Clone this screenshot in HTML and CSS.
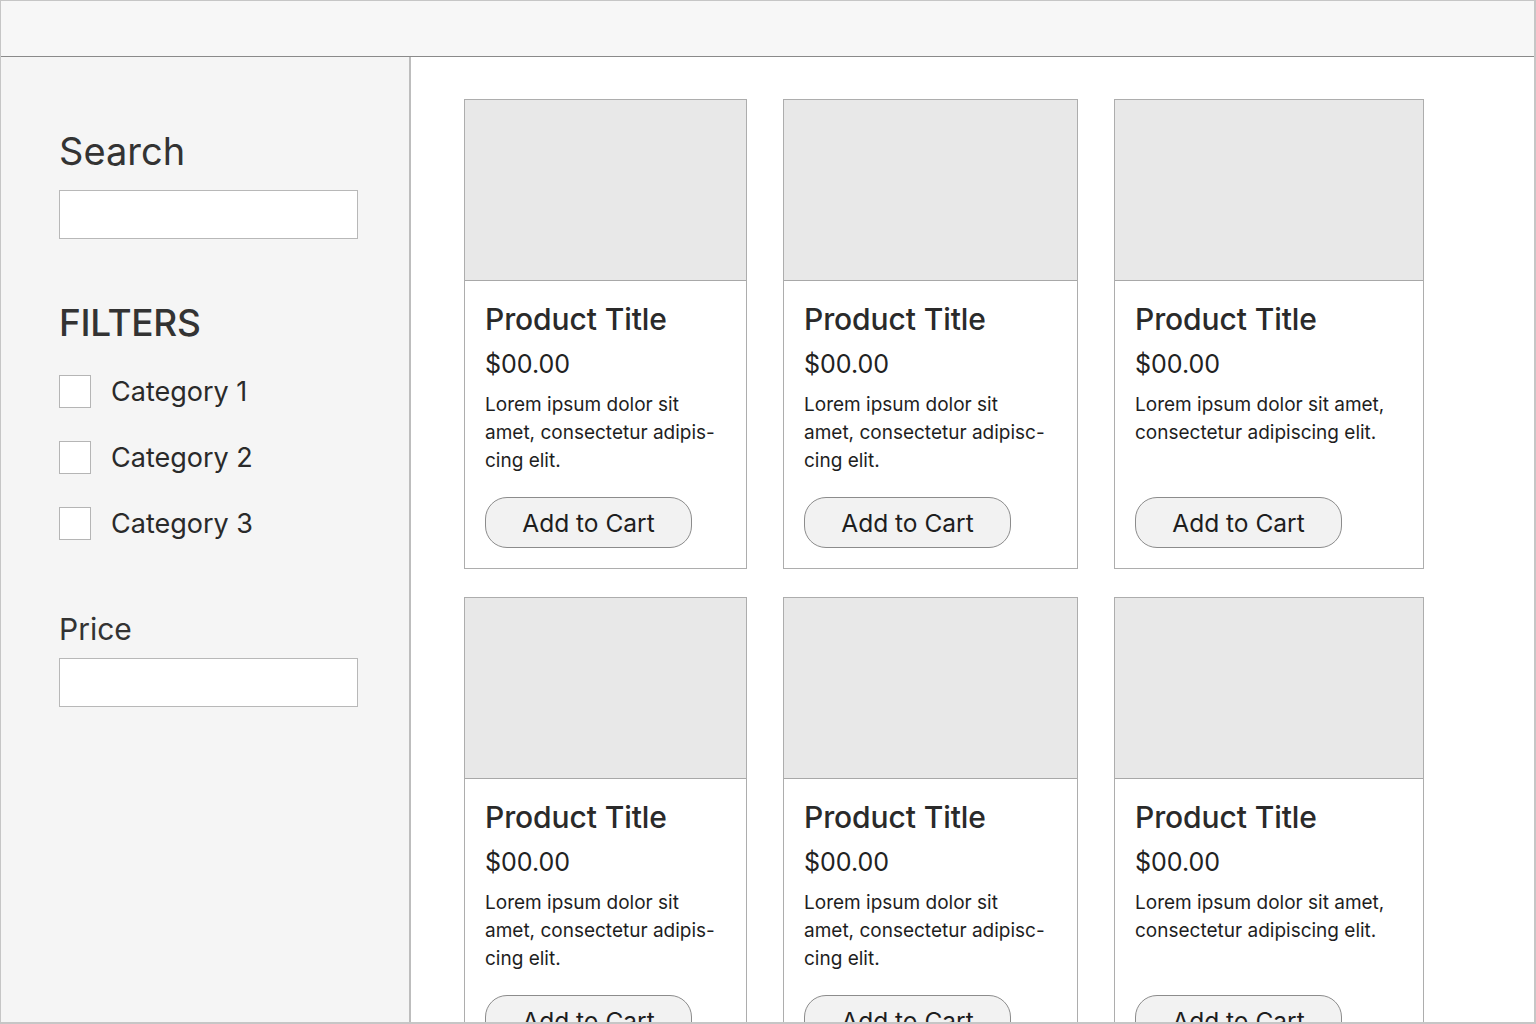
FILE: index.html
```html
<!DOCTYPE html>
<html>
<head>
<meta charset="utf-8">
<link rel="stylesheet" href="styles.css">
</head>
<body>
<div class="app">
  <header class="topbar"></header>
  <div class="layout">
    <aside class="sidebar">
      <h2 class="side-title search-title">Search</h2>
      <div class="field"></div>
      <h2 class="side-title filters-title">FILTERS</h2>
      <ul class="cats">
        <li><span class="box"></span><span>Category 1</span></li>
        <li><span class="box"></span><span>Category 2</span></li>
        <li><span class="box"></span><span>Category 3</span></li>
      </ul>
      <h3 class="price-title">Price</h3>
      <div class="field"></div>
    </aside>
    <main class="main">
      <div class="grid">
        <div class="card"><div class="thumb"></div><div class="info"><h4>Product Title</h4><div class="price">$00.00</div><p class="desc">Lorem ipsum dolor sit<br>amet, consectetur adipis-<br>cing elit.</p><button class="btn">Add to Cart</button></div></div>
        <div class="card"><div class="thumb"></div><div class="info"><h4>Product Title</h4><div class="price">$00.00</div><p class="desc">Lorem ipsum dolor sit<br>amet, consectetur adipisc-<br>cing elit.</p><button class="btn">Add to Cart</button></div></div>
        <div class="card"><div class="thumb"></div><div class="info"><h4>Product Title</h4><div class="price">$00.00</div><p class="desc">Lorem ipsum dolor sit amet,<br>consectetur adipiscing elit.</p><button class="btn">Add to Cart</button></div></div>
        <div class="card"><div class="thumb"></div><div class="info"><h4>Product Title</h4><div class="price">$00.00</div><p class="desc">Lorem ipsum dolor sit<br>amet, consectetur adipis-<br>cing elit.</p><button class="btn">Add to Cart</button></div></div>
        <div class="card"><div class="thumb"></div><div class="info"><h4>Product Title</h4><div class="price">$00.00</div><p class="desc">Lorem ipsum dolor sit<br>amet, consectetur adipisc-<br>cing elit.</p><button class="btn">Add to Cart</button></div></div>
        <div class="card"><div class="thumb"></div><div class="info"><h4>Product Title</h4><div class="price">$00.00</div><p class="desc">Lorem ipsum dolor sit amet,<br>consectetur adipiscing elit.</p><button class="btn">Add to Cart</button></div></div>
      </div>
    </main>
  </div>
</div>
</body>
</html>
```

FILE: styles.css
```css
html, body {
  margin: 0;
  padding: 0;
  background: #ffffff;
}
body {
  font-family: Inter, "Noto Sans", "Liberation Sans", sans-serif;
  color: #222;
}
.app {
  width: 1536px;
  height: 1024px;
  box-sizing: border-box;
  border: 1px solid #c6c6c6;
  border-bottom-width: 2px;
  border-right-width: 2px;
  display: flex;
  flex-direction: column;
  overflow: hidden;
}
.topbar {
  height: 55px;
  flex: none;
  background: #f7f7f7;
  border-bottom: 1px solid #8a8a8a;
}
.layout {
  flex: 1;
  display: flex;
  min-height: 0;
}
.sidebar {
  width: 410px;
  flex: none;
  background: #f5f5f5;
  border-right: 2px solid #bdbdbd;
  padding: 72px 0 0 58px;
  box-sizing: border-box;
}
.side-title {
  margin: 0;
  font-weight: 400;
  color: #333;
}
.search-title {
  font-size: 38px;
  line-height: 44px;
}
.field {
  width: 297px;
  height: 47px;
  background: #fff;
  border: 1px solid #b8b8b8;
  margin-top: 17px;
}
.filters-title {
  font-size: 37px;
  line-height: 44px;
  margin-top: 62px;
  font-weight: 500;
  letter-spacing: -0.3px;
}
.cats {
  list-style: none;
  margin: 30px 0 0 0;
  padding: 0;
  display: flex;
  flex-direction: column;
  gap: 33px;
}
.cats li {
  display: flex;
  align-items: center;
  gap: 20px;
  height: 33px;
  font-size: 27px;
  color: #2a2a2a;
}
.box {
  width: 32px;
  height: 33px;
  background: #fff;
  border: 1px solid #b5b5b5;
  box-sizing: border-box;
  flex: none;
}
.price-title {
  margin: 71px 0 0 0;
  font-size: 30px;
  line-height: 36px;
  font-weight: 400;
  color: #333;
}
.price-title + .field {
  margin-top: 11px;
}
.main {
  flex: 1;
  padding: 42px 0 0 53px;
  overflow: hidden;
}
.grid {
  display: grid;
  grid-template-columns: 283px 295px 310px;
  grid-auto-rows: 470px;
  column-gap: 36px;
  row-gap: 28px;
}
.card {
  border: 1px solid #adadad;
  background: #fff;
  display: flex;
  flex-direction: column;
  box-sizing: border-box;
}
.thumb {
  height: 180px;
  background: #e8e8e8;
  border-bottom: 1px solid #a8a8a8;
  flex: none;
}
.info {
  padding: 20px 20px 0 20px;
  display: flex;
  flex-direction: column;
  flex: 1;
}
.info h4 {
  margin: 0;
  font-size: 30px;
  line-height: 36px;
  font-weight: 500;
  color: #2a2a2a;
  letter-spacing: -0.1px;
}
.price {
  font-size: 25px;
  line-height: 34px;
  margin-top: 10px;
  color: #222;
}
.desc {
  margin: 10px 0 0 0;
  font-size: 19px;
  line-height: 28px;
  color: #1e1e1e;
}
.btn {
  margin-top: auto;
  margin-bottom: 20px;
  width: 207px;
  height: 51px;
  border: 1px solid #8c8c8c;
  border-radius: 22px;
  background: #f2f2f2;
  font-family: inherit;
  font-size: 24.5px;
  color: #1e1e1e;
  padding: 0;
}
```
